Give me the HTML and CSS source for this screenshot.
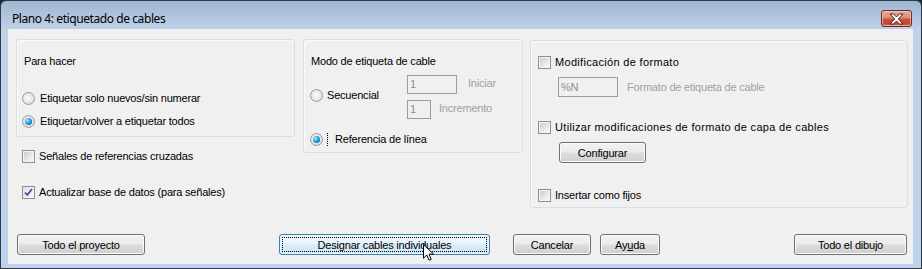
FILE: index.html
```html
<!DOCTYPE html>
<html lang="es">
<head>
<meta charset="utf-8">
<title>Plano 4: etiquetado de cables</title>
<link rel="stylesheet" href="styles.css">
</head>
<body>
<div class="window">
  <div class="titlebar">
    <span class="title">Plano 4: etiquetado de cables</span>
    <button class="close" aria-label="Cerrar">
      <svg width="17" height="12" viewBox="0 0 17 12"><path d="M2 1h3.6l2.9 3L11.4 1H15l-4.6 5 4.6 5h-3.6l-2.9-3-2.9 3H2l4.6-5z" fill="#fff" stroke="#4b1f1a" stroke-width="1" stroke-linejoin="round"/></svg>
    </button>
  </div>
  <div class="client">
    <div class="top-row">
      <div class="col1">
        <div class="group g-todo">
          <div class="g-title">Para hacer</div>
          <div class="opt r1"><span class="radio"></span><span class="txt">Etiquetar solo nuevos/sin numerar</span></div>
          <div class="opt r2"><span class="radio checked"></span><span class="txt">Etiquetar/volver a etiquetar todos</span></div>
        </div>
        <div class="opt c1"><span class="check"></span><span class="txt">Señales de referencias cruzadas</span></div>
        <div class="opt c2"><span class="check checked"><svg width="9" height="9" viewBox="0 0 9 9"><path d="M1 4.5l2.3 2.5L8 1" fill="none" stroke="#3a4e8c" stroke-width="1.7"/></svg></span><span class="txt">Actualizar base de datos (para señales)</span></div>
      </div>
      <div class="group g-mode">
        <div class="g-title">Modo de etiqueta de cable</div>
        <div class="seq">
          <div class="opt seq-opt"><span class="radio"></span><span class="txt">Secuencial</span></div>
          <div class="fields">
            <div class="field-row"><span class="input w-start">1</span><span class="dim l-start">Iniciar</span></div>
            <div class="field-row"><span class="input w-inc">1</span><span class="dim l-inc">Incremento</span></div>
          </div>
        </div>
        <div class="opt ref-opt"><span class="radio checked"></span><span class="txt focus">Referencia de línea</span></div>
      </div>
      <div class="group g-fmt">
        <div class="opt"><span class="check"></span><span class="txt wide">Modificación de formato</span></div>
        <div class="field-row fmt-row"><span class="input w-fmt">%N</span><span class="dim l-fmt">Formato de etiqueta de cable</span></div>
        <div class="opt f2"><span class="check"></span><span class="txt wide">Utilizar modificaciones de formato de capa de cables</span></div>
        <button class="btn b-config">Configurar</button>
        <div class="opt f3"><span class="check"></span><span class="txt">Insertar como fijos</span></div>
      </div>
    </div>
    <div class="buttons">
      <button class="btn b-proj">Todo el proyecto</button>
      <button class="btn b-design default"><span class="focus-rect">Designar cables individuales</span></button>
      <button class="btn b-cancel">Cancelar</button>
      <button class="btn b-help">Ay<u>u</u>da</button>
      <button class="btn b-draw">Todo el dibujo</button>
    </div>
  </div>
  <svg class="cursor" width="12" height="18" viewBox="0 0 12 18"><path d="M0.5 0.5V14.2L3.8 11l2.3 5.2 2.1-0.9-2.2-5.1h4.6z" fill="#fff" stroke="#000" stroke-width="1" stroke-linejoin="miter"/></svg>
</div>
</body>
</html>
```

FILE: styles.css
```css
* { box-sizing: border-box; }
html, body { margin: 0; padding: 0; }
body {
  background: #1d232b;
  width: 922px;
  height: 269px;
  overflow: hidden;
  font-family: "Liberation Sans", Arial, sans-serif;
  font-size: 11px;
  letter-spacing: -0.2px;
  color: #000;
}
.window {
  position: relative;
  width: 922px;
  height: 269px;
  border: 1px solid #2f3a46;
  border-radius: 6px 6px 0 0;
  background: linear-gradient(#9fb6d2 0px, #b3c8e0 18px, #bed2ea 30px, #bdd2ec 100%);
  display: flex;
  flex-direction: column;
}
.titlebar {
  height: 28px;
  display: flex;
  justify-content: space-between;
  align-items: flex-start;
  padding: 0 9px 0 11px;
}
.title {
  font-family: "Noto Sans", "Open Sans", sans-serif;
  font-size: 12px;
  line-height: 16px;
  margin-top: 10px;
  letter-spacing: -0.42px;
  color: #000;
}
.close {
  margin-top: 9px;
  width: 31px;
  height: 17px;
  padding: 0;
  border: 1px solid #6b2a24;
  border-radius: 3px;
  background: linear-gradient(#e8a99c 0%, #d98b7b 45%, #c8523d 55%, #c4452f 85%, #d7785f 100%);
  box-shadow: inset 0 0 0 1px rgba(255,230,220,0.5);
  display: flex;
  align-items: center;
  justify-content: center;
}
.client {
  flex: 1;
  margin: 0 8px 4px 7px;
  background: #f0f0f0;
  padding: 10px 0 0 8px;
  display: flex;
  flex-direction: column;
}
.top-row {
  display: flex;
  align-items: flex-start;
}
.col1 {
  width: 279px;
  display: flex;
  flex-direction: column;
}
.group {
  border: 1px solid #d5dfe5;
  border-radius: 3px;
  box-shadow: inset 1px 1px 0 #fbfbfb;
  display: flex;
  flex-direction: column;
  align-items: flex-start;
}
.g-title { line-height: 13px; height: 13px; white-space: nowrap; }
.opt {
  display: flex;
  align-items: center;
  height: 13px;
  line-height: 13px;
  white-space: nowrap;
}
.radio {
  position: relative;
  flex: none;
  width: 13px;
  height: 13px;
  border-radius: 50%;
  border: 1px solid #9a9a9a;
  background: radial-gradient(circle at 45% 45%, #fbfbfb 0%, #e6e6e6 55%, #cfcfcf 100%);
}
.radio.checked::after {
  content: "";
  position: absolute;
  left: 2px;
  top: 2px;
  width: 7px;
  height: 7px;
  border-radius: 50%;
  background: radial-gradient(circle at 35% 35%, #b8ecff 0%, #3bb2ea 35%, #0f6fb0 75%, #0b4f86 100%);
}
.check {
  flex: none;
  width: 13px;
  height: 13px;
  border: 1px solid #8e8f8f;
  background: #f4f4f4;
  padding: 1px;
  display: flex;
  align-items: center;
  justify-content: center;
}
.check::before {
  content: "";
  display: block;
  width: 9px;
  height: 9px;
  background: linear-gradient(135deg, #c9ccd1 0%, #e3e4e6 50%, #f9f9f9 100%);
}
.check.checked::before { display: none; }
.check.checked {
  background: linear-gradient(135deg, #dfe1e5, #fafafa);
}
.radio + .txt { margin-left: 5px; }
.check + .txt { margin-left: 4px; }
.txt.wide { letter-spacing: 0.32px; }

/* Para hacer */
.g-todo { height: 98px; padding: 15px 0 0 0; }
.g-todo .g-title { margin-left: 7px; }
.g-todo .r1 { margin: 24px 0 0 5px; }
.g-todo .r2 { margin: 10px 0 0 5px; }
.col1 > .c1 { margin: 13px 0 0 6px; }
.col1 > .c2 { margin: 23px 0 0 6px; }

/* Modo */
.g-mode { width: 220px; height: 114px; margin-left: 8px; padding: 15px 0 0 0; }
.g-mode .g-title { margin-left: 7px; }
.seq { display: flex; margin-top: 7px; }
.seq-opt { width: 103px; padding-left: 6px; margin-top: 14px; }
.seq-opt .txt { margin-left: 4px; }
.fields { display: flex; flex-direction: column; gap: 6px; }
.field-row { display: flex; align-items: center; white-space: nowrap; }
.input {
  height: 19px;
  border: 1px solid #9c9c9c;
  background: #f0f0f0;
  color: #8d8d8d;
  line-height: 17px;
  padding-left: 2px;
}
.dim { color: #a0a0a0; }
.w-start { width: 50px; }
.w-inc { width: 24px; }
.l-start { margin-left: 11px; margin-top: -3px; }
.l-inc { margin-left: 8px; margin-top: -3px; }
.ref-opt { margin: 14px 0 0 6px; }
.focus {
  padding-left: 7px;
  border-left: 1px dotted #000;
  height: 13px;
}
.ref-opt .radio + .txt.focus { margin-left: 4px; }

/* Formato */
.g-fmt { width: 378px; height: 168px; margin: 1px 0 0 7px; padding: 15px 0 0 7px; }
.fmt-row { margin: 8px 0 0 20px; }
.w-fmt { width: 60px; height: 20px; line-height: 18px; }
.l-fmt { margin-left: 9px; }
.g-fmt .f2 { margin-top: 24px; }
.b-config { margin: 8px 0 0 21px; width: 87px; height: 21px; }
.g-fmt .f3 { margin-top: 26px; }

/* Buttons */
.btn {
  font-family: "Liberation Sans", Arial, sans-serif;
  font-size: 11px;
  letter-spacing: -0.2px;
  color: #000;
  height: 21px;
  padding: 0;
  border: 1px solid #707070;
  border-radius: 3px;
  background: linear-gradient(#f2f2f2 0%, #ebebeb 48%, #dddddd 52%, #cfcfcf 100%);
  box-shadow: inset 0 0 0 1px #fbfbfb;
  display: flex;
  align-items: center;
  justify-content: center;
  white-space: nowrap;
}
.btn u { text-decoration: underline; text-underline-offset: 1px; }
.buttons {
  display: flex;
  align-items: flex-start;
  margin-top: 26px;
  padding-left: 1px;
}
.b-proj { width: 128px; }
.b-design { width: 211px; margin-left: 134px; }
.b-cancel { width: 78px; margin-left: 23px; }
.b-help { width: 60px; margin-left: 9px; }
.b-draw { width: 113px; margin-left: 134px; }
.btn.default {
  border-color: #3c7fb1;
  background: linear-gradient(#f3f9fd 0%, #e8f3fb 48%, #d9ebf8 52%, #cfe5f5 100%);
  box-shadow: inset 0 0 0 1px #e9f5fd;
  padding: 2px;
}
.focus-rect {
  flex: 1;
  align-self: stretch;
  display: flex;
  align-items: center;
  justify-content: center;
  border: 1px dotted #000;
}
.cursor {
  position: absolute;
  left: 422px;
  top: 243px;
}
```
